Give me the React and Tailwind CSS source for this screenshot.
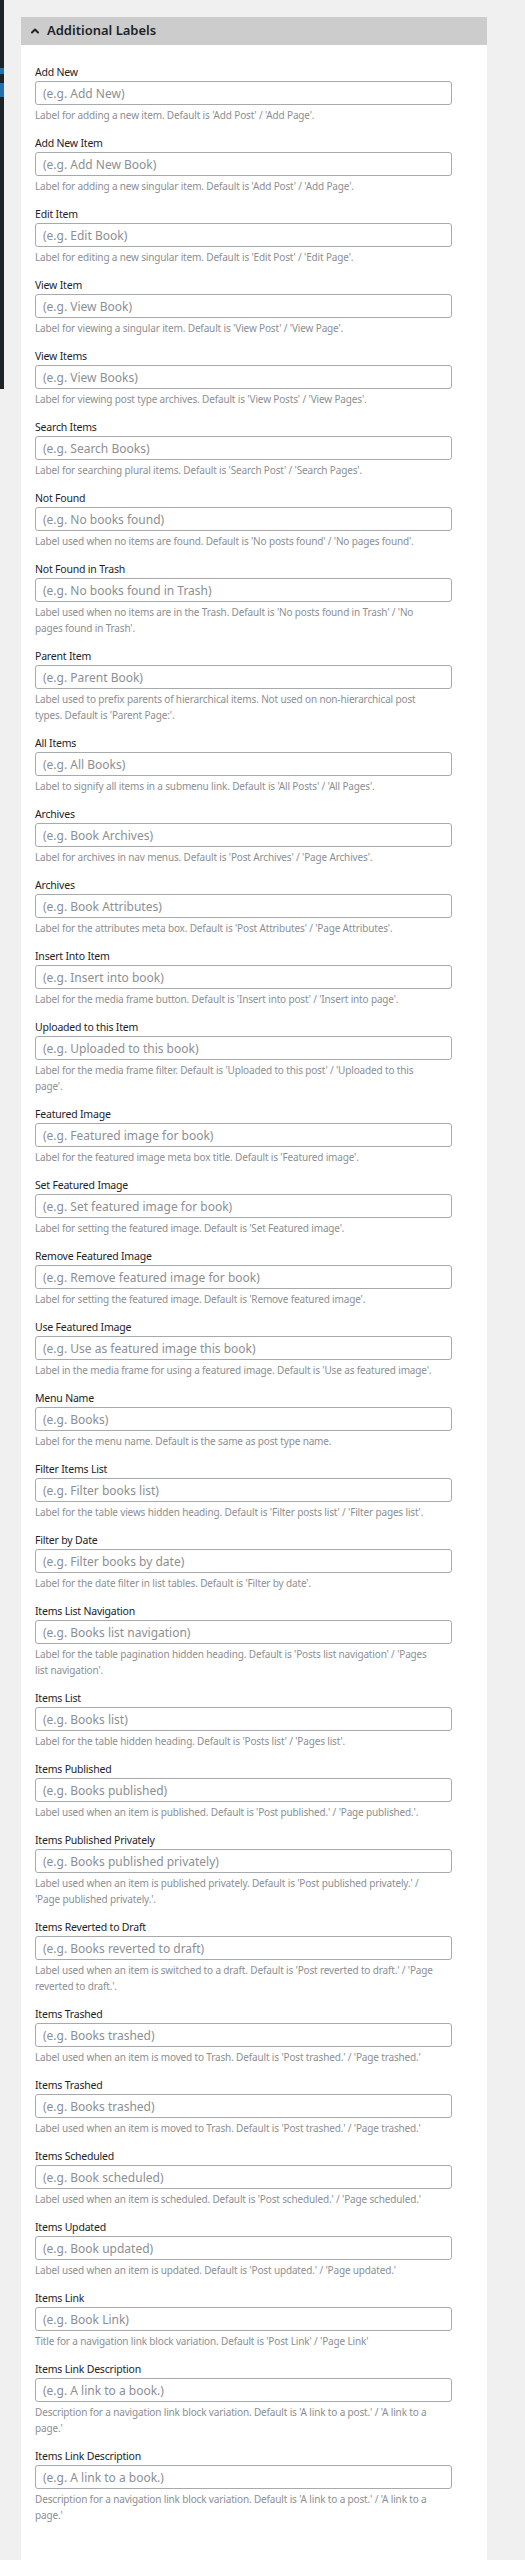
import { ChevronUp } from "lucide-react";

const fields = [
  ["Add New", "(e.g. Add New)", "Label for adding a new item. Default is 'Add Post' / 'Add Page'."],
  ["Add New Item", "(e.g. Add New Book)", "Label for adding a new singular item. Default is 'Add Post' / 'Add Page'."],
  ["Edit Item", "(e.g. Edit Book)", "Label for editing a new singular item. Default is 'Edit Post' / 'Edit Page'."],
  ["View Item", "(e.g. View Book)", "Label for viewing a singular item. Default is 'View Post' / 'View Page'."],
  ["View Items", "(e.g. View Books)", "Label for viewing post type archives. Default is 'View Posts' / 'View Pages'."],
  ["Search Items", "(e.g. Search Books)", "Label for searching plural items. Default is 'Search Post' / 'Search Pages'."],
  ["Not Found", "(e.g. No books found)", "Label used when no items are found. Default is 'No posts found' / 'No pages found'."],
  ["Not Found in Trash", "(e.g. No books found in Trash)", "Label used when no items are in the Trash. Default is 'No posts found in Trash' / 'No pages found in Trash'."],
  ["Parent Item", "(e.g. Parent Book)", "Label used to prefix parents of hierarchical items. Not used on non-hierarchical post types. Default is 'Parent Page:'."],
  ["All Items", "(e.g. All Books)", "Label to signify all items in a submenu link. Default is 'All Posts' / 'All Pages'."],
  ["Archives", "(e.g. Book Archives)", "Label for archives in nav menus. Default is 'Post Archives' / 'Page Archives'."],
  ["Archives", "(e.g. Book Attributes)", "Label for the attributes meta box. Default is 'Post Attributes' / 'Page Attributes'."],
  ["Insert Into Item", "(e.g. Insert into book)", "Label for the media frame button. Default is 'Insert into post' / 'Insert into page'."],
  ["Uploaded to this Item", "(e.g. Uploaded to this book)", "Label for the media frame filter. Default is 'Uploaded to this post' / 'Uploaded to this page'."],
  ["Featured Image", "(e.g. Featured image for book)", "Label for the featured image meta box title. Default is 'Featured image'."],
  ["Set Featured Image", "(e.g. Set featured image for book)", "Label for setting the featured image. Default is 'Set Featured image'."],
  ["Remove Featured Image", "(e.g. Remove featured image for book)", "Label for setting the featured image. Default is 'Remove featured image'."],
  ["Use Featured Image", "(e.g. Use as featured image this book)", "Label in the media frame for using a featured image. Default is 'Use as featured image'."],
  ["Menu Name", "(e.g. Books)", "Label for the menu name. Default is the same as post type name."],
  ["Filter Items List", "(e.g. Filter books list)", "Label for the table views hidden heading. Default is 'Filter posts list' / 'Filter pages list'."],
  ["Filter by Date", "(e.g. Filter books by date)", "Label for the date filter in list tables. Default is 'Filter by date'."],
  ["Items List Navigation", "(e.g. Books list navigation)", "Label for the table pagination hidden heading. Default is 'Posts list navigation' / 'Pages list navigation'."],
  ["Items List", "(e.g. Books list)", "Label for the table hidden heading. Default is 'Posts list' / 'Pages list'."],
  ["Items Published", "(e.g. Books published)", "Label used when an item is published. Default is 'Post published.' / 'Page published.'."],
  ["Items Published Privately", "(e.g. Books published privately)", "Label used when an item is published privately. Default is 'Post published privately.' / 'Page published privately.'."],
  ["Items Reverted to Draft", "(e.g. Books reverted to draft)", "Label used when an item is switched to a draft. Default is 'Post reverted to draft.' / 'Page reverted to draft.'."],
  ["Items Trashed", "(e.g. Books trashed)", "Label used when an item is moved to Trash. Default is 'Post trashed.' / 'Page trashed.'"],
  ["Items Trashed", "(e.g. Books trashed)", "Label used when an item is moved to Trash. Default is 'Post trashed.' / 'Page trashed.'"],
  ["Items Scheduled", "(e.g. Book scheduled)", "Label used when an item is scheduled. Default is 'Post scheduled.' / 'Page scheduled.'"],
  ["Items Updated", "(e.g. Book updated)", "Label used when an item is updated. Default is 'Post updated.' / 'Page updated.'"],
  ["Items Link", "(e.g. Book Link)", "Title for a navigation link block variation. Default is 'Post Link' / 'Page Link'"],
  ["Items Link Description", "(e.g. A link to a book.)", "Description for a navigation link block variation. Default is 'A link to a post.' / 'A link to a page.'"],
  ["Items Link Description", "(e.g. A link to a book.)", "Description for a navigation link block variation. Default is 'A link to a post.' / 'A link to a page.'"],
];

function Field({ label, placeholder, hint }) {
  return (
    <div className="mb-[11px] w-[417px]">
      <label className="block text-[10.5px] leading-[18px] tracking-[-0.2px] text-[#1d2327]">{label}</label>
      <input
        type="text"
        placeholder={placeholder}
        className="block h-[24px] w-full rounded-[3px] border border-[#a7aaad] bg-white px-[7px] text-[12px] text-[#2c3338] placeholder:text-[#8c8f94] outline-none"
      />
      <p className="mt-[2px] pr-[12px] text-[10px] leading-[16px] tracking-[-0.15px] text-[#8c8f94]">{hint}</p>
    </div>
  );
}

export default function App() {
  return (
    <div className="flex h-[2560px] overflow-hidden bg-[#f0f0f1] font-['Noto_Sans',sans-serif]">
      <div className="flex h-[389px] w-[4px] flex-col bg-[#1d2327]">
        <div className="mt-[68px] h-[6px] bg-[#2271b1]" />
        <div className="mt-[9px] h-[14px] bg-[#2271b1]" />
      </div>
      <div className="flex flex-1 flex-col pl-[17px] pr-[38px] pt-[17px]">
        <div className="flex h-[28px] items-center gap-[6px] bg-[#cccccc] pl-[8px] text-[#1d2327]">
          <ChevronUp size={12} strokeWidth={4} />
          <span className="text-[13px] font-semibold">Additional Labels</span>
        </div>
        <div className="flex-1 bg-white pl-[14px] pt-[18px]">
          {fields.map(([label, placeholder, hint], i) => (
            <Field key={i} label={label} placeholder={placeholder} hint={hint} />
          ))}
        </div>
      </div>
    </div>
  );
}
